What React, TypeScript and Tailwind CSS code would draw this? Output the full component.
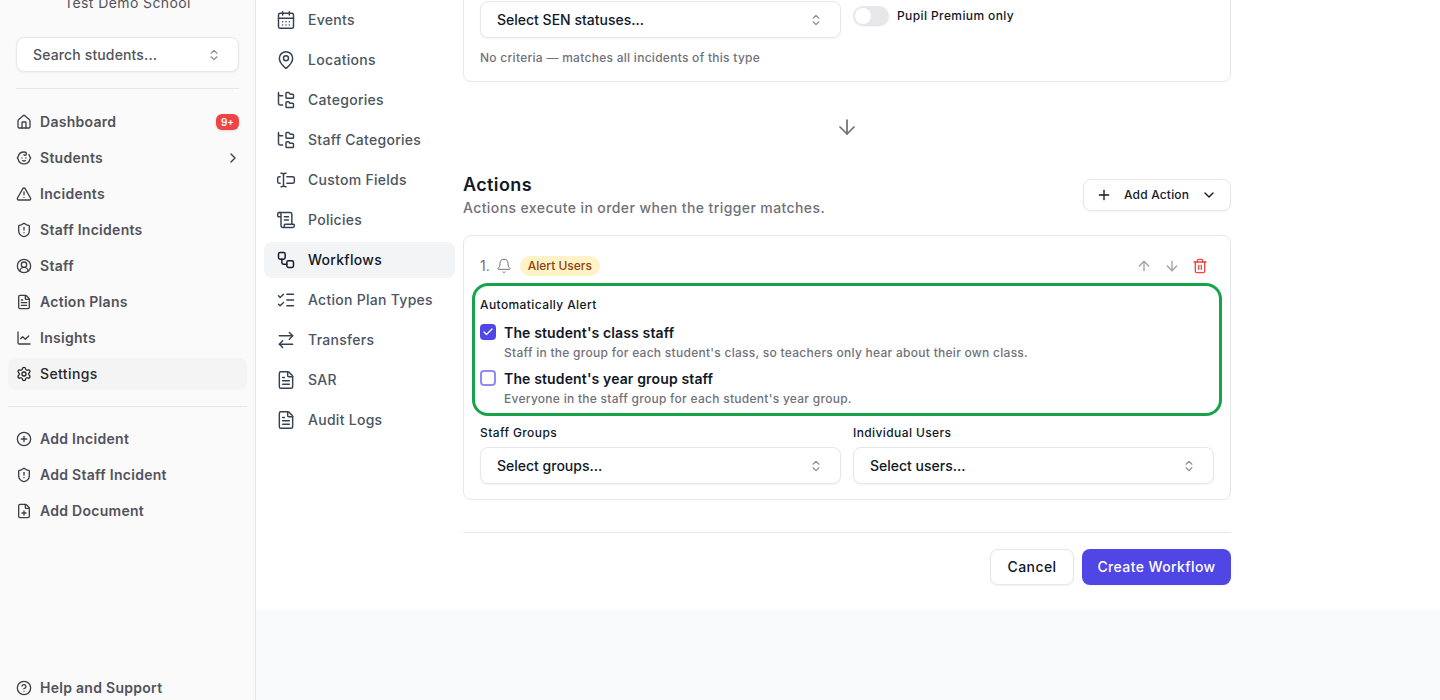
import {
    ArrowDown,
    ArrowRightLeft,
    ArrowUp,
    Bell,
    Baby,
    CalendarDays,
    ChartLine,
    Check,
    ChevronDown,
    ChevronRight,
    ChevronsUpDown,
    CircleHelp,
    CirclePlus,
    CircleUserRound,
    FilePlus,
    FileText,
    FolderTree,
    House,
    ListChecks,
    MapPin,
    Plus,
    ScrollText,
    Settings,
    ShieldAlert,
    TextCursorInput,
    Trash2,
    TriangleAlert,
    Workflow,
} from "lucide-react"

const mainLinks = [
    { label: "Dashboard", icon: House },
    { label: "Students", icon: Baby },
    { label: "Incidents", icon: TriangleAlert },
    { label: "Staff Incidents", icon: ShieldAlert },
    { label: "Staff", icon: CircleUserRound },
    { label: "Action Plans", icon: FileText },
    { label: "Insights", icon: ChartLine },
    { label: "Settings", icon: Settings },
]

const addLinks = [
    { label: "Add Incident", icon: CirclePlus },
    { label: "Add Staff Incident", icon: ShieldAlert },
    { label: "Add Document", icon: FilePlus },
]

const settingsLinks = [
    { label: "Events", icon: CalendarDays },
    { label: "Locations", icon: MapPin },
    { label: "Categories", icon: FolderTree },
    { label: "Staff Categories", icon: FolderTree },
    { label: "Custom Fields", icon: TextCursorInput },
    { label: "Policies", icon: ScrollText },
    { label: "Workflows", icon: Workflow },
    { label: "Action Plan Types", icon: ListChecks },
    { label: "Transfers", icon: ArrowRightLeft },
    { label: "SAR", icon: FileText },
    { label: "Audit Logs", icon: FileText },
]

function SelectBox({ label, className = "" }: { label: string; className?: string }) {
    return (
        <div className={`flex h-[37px] items-center justify-between rounded-lg border border-[#e5e7eb] bg-white pl-4 pr-[17px] text-sm font-medium tracking-normal text-[#111827] shadow-xs ${className}`}>
            <span>{label}</span>
            <ChevronsUpDown size={14} className="text-[#8a8a93]" />
        </div>
    )
}

function SideLink({ label, icon: Icon, active }: { label: string; icon: typeof House; active?: boolean }) {
    return (
        <div className={`flex h-8 items-center gap-2 rounded-lg px-2 text-sm ${active ? "bg-[#f4f4f5] font-medium text-[#27272a]" : "font-semibold tracking-[0.02em] text-[#52525b]"}`}>
            <Icon size={16} strokeWidth={2} className={active ? "" : "text-[#3f3f46]"} />
            <span>{label}</span>
            {label === "Dashboard" && (
                <span className="ml-auto flex h-4 w-[23px] items-center justify-center rounded-md bg-[#ef4444] text-[10px] font-semibold tracking-normal text-white shadow-sm">9+</span>
            )}
            {label === "Students" && <ChevronRight size={16} className="-mr-[2px] ml-auto text-[#3f3f46]" />}
        </div>
    )
}

function AlertOption({ title, text, checked }: { title: string; text: string; checked?: boolean }) {
    return (
        <div className="flex gap-2">
            <div className={`mt-[2px] flex h-4 w-4 shrink-0 items-center justify-center rounded-[4px] border-2 ${checked ? "border-[#4f46e5] bg-[#4f46e5]" : "border-[#8f8cf2] bg-white"}`}>
                {checked && <Check size={12} strokeWidth={2.5} className="shrink-0 text-white" />}
            </div>
            <div>
                <div className="text-sm leading-[22px] font-semibold tracking-[0.01em] text-[#111827]">{title}</div>
                <div className="mt-[1px] text-xs leading-[16px] font-medium tracking-[0.023em] text-[#71717a]">{text}</div>
            </div>
        </div>
    )
}

export default function App() {
    return (
        <div className="flex h-[700px] overflow-hidden bg-white font-['Inter',sans-serif] tracking-[0.025em]">
            <aside className="flex w-[256px] shrink-0 flex-col border-r border-[#e5e7eb] bg-[#fafafa] px-2">
                <div className="-mt-[7px] text-center text-sm leading-5 text-[#52525b]">Test Demo School</div>
                <div className="mx-2 mt-[24px] flex h-[35px] items-center justify-between rounded-lg border border-[#e5e7eb] bg-white pl-4 pr-[17px] text-sm font-medium tracking-[0.01em] text-[#52525b] shadow-xs">
                    <span>Search students...</span>
                    <ChevronsUpDown size={14} className="text-[#8a8a93]" />
                </div>
                <div className="mx-2 mt-4 border-t border-[#e5e7eb]"></div>
                <nav className="mt-[17px] flex flex-col gap-1">
                    {mainLinks.map((link) => (
                        <SideLink key={link.label} label={link.label} icon={link.icon} active={link.label === "Settings"} />
                    ))}
                </nav>
                <div className="mt-4 border-t border-[#e5e7eb]"></div>
                <nav className="mt-4 flex flex-col gap-1">
                    {addLinks.map((link) => (
                        <SideLink key={link.label} label={link.label} icon={link.icon} />
                    ))}
                </nav>
                <div className="mt-auto mb-[-4px]">
                    <SideLink label="Help and Support" icon={CircleHelp} />
                </div>
            </aside>

            <main className="flex min-w-0 flex-1 flex-col bg-[#f9fafb]">
                <div className="flex h-[610px] bg-white">
                    <nav className="flex w-[207px] shrink-0 flex-col gap-1 px-2 pt-[2px]">
                        {settingsLinks.map((link) => {
                            const Icon = link.icon
                            const active = link.label === "Workflows"
                            return (
                                <div key={link.label} className={`flex h-9 items-center gap-3 rounded-lg px-3 text-sm font-medium tracking-[0.02em] ${active ? "bg-[#f3f4f6] text-[#111827]" : "text-[#4b5563]"}`}>
                                    <Icon size={20} strokeWidth={1.75} className={active ? "text-[#111827]" : "text-[#374151]"} />
                                    <span>{link.label}</span>
                                </div>
                            )
                        })}
                    </nav>

                    <div className="w-[768px] shrink-0">
                        <section className="-mt-[16px] rounded-b-lg border border-[#e5e7eb] px-4 pt-[16px] pb-[15px]">
                            <div className="grid grid-cols-2 gap-3">
                                <SelectBox label="Select SEN statuses..." />
                                <div className="flex h-[30px] items-center gap-2">
                                    <div className="flex h-5 w-9 items-center rounded-full bg-[#e5e7eb] p-[2px] shadow-xs">
                                        <div className="h-4 w-4 rounded-full bg-white"></div>
                                    </div>
                                    <span className="text-xs font-medium text-[#111827]">Pupil Premium only</span>
                                </div>
                            </div>
                            <p className="mt-[12px] text-xs leading-4 font-medium tracking-[0.023em] text-[#71717a]">No criteria — matches all incidents of this type</p>
                        </section>

                        <div className="flex h-[90px] items-center justify-center">
                            <ArrowDown size={24} strokeWidth={1.75} className="text-[#71717a]" />
                        </div>

                        <div className="mt-[7px] flex items-start justify-between">
                            <div className="-mt-2">
                                <h2 className="text-lg leading-7 font-semibold text-[#111827]">Actions</h2>
                                <p className="-mt-[1px] text-sm leading-5 font-medium text-[#71717a]">Actions execute in order when the trigger matches.</p>
                            </div>
                            <button className="flex h-8 w-[148px] items-center gap-3 rounded-lg border border-[#e5e7eb] bg-white pl-3 text-xs font-medium tracking-[0.015em] text-[#111827] shadow-xs">
                                <Plus size={16} />
                                <span>Add Action</span>
                                <ChevronDown size={16} />
                            </button>
                        </div>

                        <section className="mt-[17px] h-[265px] rounded-lg border border-[#e5e7eb] px-2 pt-5">
                            <div className="flex h-[20px] items-center pl-2 pr-[14px] tracking-normal">
                                <span className="text-sm text-[#71717a]">1.</span>
                                <Bell size={16} strokeWidth={1.5} className="ml-[6px] text-[#71717a]" />
                                <span className="ml-2 flex h-5 items-center rounded-full bg-[#fef3c7] px-2 text-xs font-medium text-[#92400e]">Alert Users</span>
                                <div className="ml-auto flex items-center gap-3">
                                    <ArrowUp size={16} className="text-[#a1a1aa]" />
                                    <ArrowDown size={16} className="text-[#a1a1aa]" />
                                    <Trash2 size={16} className="text-[#ef4444]" />
                                </div>
                            </div>
                            <div className="mt-[7px] h-[133px] rounded-2xl border-[3px] border-[#16a34a] px-[5px] pt-[11px]">
                                <div className="text-xs leading-4 font-medium text-[#111827]">Automatically Alert</div>
                                <div className="mt-[9px] flex flex-col gap-[7px]">
                                    <AlertOption checked title="The student's class staff" text="Staff in the group for each student's class, so teachers only hear about their own class." />
                                    <AlertOption title="The student's year group staff" text="Everyone in the staff group for each student's year group." />
                                </div>
                            </div>
                            <div className="mt-[9px] grid grid-cols-2 gap-3 px-2">
                                <div>
                                    <div className="pb-[6px] text-xs leading-4 font-medium text-[#111827]">Staff Groups</div>
                                    <SelectBox label="Select groups..." />
                                </div>
                                <div>
                                    <div className="pb-[6px] text-xs leading-4 font-medium text-[#111827]">Individual Users</div>
                                    <SelectBox label="Select users..." />
                                </div>
                            </div>
                        </section>

                        <div className="mt-8 flex justify-end gap-2 border-t border-[#e5e7eb] pt-4">
                            <button className="h-9 w-[84px] rounded-lg border border-[#e5e7eb] bg-white text-sm font-medium text-[#111827] shadow-xs">Cancel</button>
                            <button className="h-9 w-[149px] rounded-lg bg-[#4f46e5] text-sm font-medium text-white shadow-xs">Create Workflow</button>
                        </div>
                    </div>
                </div>
            </main>
        </div>
    )
}
